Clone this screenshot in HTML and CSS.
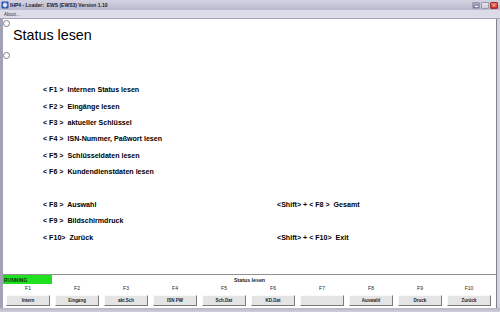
FILE: index.html
```html
<!DOCTYPE html>
<html lang="de">
<head>
    <meta charset="UTF-8">
    <title>IHP4 - Loader</title>
    <link rel="stylesheet" href="styles.css">
</head>
<body>
    <div class="window">
        <div class="titlebar">
            <svg class="app-icon" viewBox="0 0 8 8">
                <rect x="0.5" y="0.5" width="7" height="7" rx="1" fill="#3050b0"/>
                <circle cx="4" cy="4" r="2.4" fill="#a8c8f0"/>
                <path d="M2 4h4M4 2v4" stroke="#fff" stroke-width="0.8"/>
            </svg>
            <span class="title">IHP4 - Loader:  EWS (EWS3) Version 1.10</span>
            <div class="controls">
                <span class="ctl min"></span>
                <span class="ctl max"></span>
                <span class="ctl close">
                    <svg viewBox="0 0 8 8"><path d="M2 2l4 4M6 2l-4 4" stroke="#fff" stroke-width="1.1"/></svg>
                </span>
            </div>
        </div>
        <div class="menubar"><span>About...</span></div>

        <div class="client">
            <div class="screen">
                <span class="dot dot-top"></span>
                <span class="dot dot-low"></span>
                <h1>Status lesen</h1>
                <div class="keys">
                    <div>&lt; F1 &gt;  Internen Status lesen</div><div></div>
                    <div>&lt; F2 &gt;  Eingänge lesen</div><div></div>
                    <div>&lt; F3 &gt;  aktueller Schlüssel</div><div></div>
                    <div>&lt; F4 &gt;  ISN-Nummer, Paßwort lesen</div><div></div>
                    <div>&lt; F5 &gt;  Schlüsseldaten lesen</div><div></div>
                    <div>&lt; F6 &gt;  Kundendienstdaten lesen</div><div></div>
                    <div></div><div></div>
                    <div>&lt; F8 &gt;  Auswahl</div><div>&lt;Shift&gt; + &lt; F8 &gt;  Gesamt</div>
                    <div>&lt; F9 &gt;  Bildschirmdruck</div><div></div>
                    <div>&lt; F10&gt;  Zurück</div><div>&lt;Shift&gt; + &lt; F10&gt;  Exit</div>
                </div>
            </div>

            <div class="footer">
                <div class="statusline">
                    <span class="running">RUNNING</span>
                    <span class="status-text">Status lesen</span>
                </div>
                <div class="fkeys">
                    <div class="fk"><span class="fk-label">F1</span><span class="fk-btn">Intern</span></div>
                    <div class="fk"><span class="fk-label">F2</span><span class="fk-btn">Eingang</span></div>
                    <div class="fk"><span class="fk-label">F3</span><span class="fk-btn">akt.Sch</span></div>
                    <div class="fk"><span class="fk-label">F4</span><span class="fk-btn">ISN PW</span></div>
                    <div class="fk"><span class="fk-label">F5</span><span class="fk-btn">Sch.Dat</span></div>
                    <div class="fk"><span class="fk-label">F6</span><span class="fk-btn">KD.Dat</span></div>
                    <div class="fk"><span class="fk-label">F7</span><span class="fk-btn"></span></div>
                    <div class="fk"><span class="fk-label">F8</span><span class="fk-btn">Auswahl</span></div>
                    <div class="fk"><span class="fk-label">F9</span><span class="fk-btn">Druck</span></div>
                    <div class="fk"><span class="fk-label">F10</span><span class="fk-btn">Zurück</span></div>
                </div>
            </div>
        </div>
        <div class="bottom-frame"></div>
    </div>
</body>
</html>
```

FILE: styles.css
```css
body {
    margin: 0;
    font-family: "Liberation Sans", Arial, sans-serif;
    background: #fff;
}

.window {
    width: 500px;
    height: 312px;
    display: flex;
    flex-direction: column;
    background: #d4d4e0;
    overflow: hidden;
}

/* Titelleiste */
.titlebar {
    height: 10px;
    display: flex;
    align-items: center;
    background: linear-gradient(#d2d2e2, #babace);
    padding-left: 1px;
}

.app-icon {
    width: 8px;
    height: 8px;
    margin-right: 1px;
}

.title {
    font-size: 5px;
    font-weight: bold;
    color: #1c1c30;
    white-space: pre;
}

.controls {
    margin-left: auto;
    display: flex;
    gap: 1px;
    padding-right: 2px;
}

.ctl {
    width: 8px;
    height: 7px;
    border-radius: 1px;
    box-sizing: border-box;
    border: 1px solid #9a9ab0;
    display: flex;
}

.min {
    background: linear-gradient(#a8a8c0, #7c7c98);
    position: relative;
}

.min::after {
    content: "";
    position: absolute;
    left: 2px;
    bottom: 1px;
    width: 3px;
    height: 1px;
    background: #fff;
}

.max {
    background: linear-gradient(#e6e6ee, #cacad6);
}

.close {
    background: linear-gradient(#f07060, #c82c20);
    border-color: #a03030;
}

.close svg {
    width: 100%;
    height: 100%;
}

.menubar {
    height: 8px;
    background: #dcdce8;
    border-bottom: 1px solid #a4a4b4;
    display: flex;
    align-items: center;
    padding-left: 4px;
    font-size: 4.5px;
    color: #303040;
}

/* Arbeitsbereich */
.client {
    flex: 1;
    display: flex;
    flex-direction: column;
    background: #fff;
    border-left: 3px solid #a2a2b4;
    border-right: 1px solid #808090;
    margin-right: 3px;
}

.screen {
    height: 255px;
    position: relative;
    box-sizing: border-box;
    padding: 7px 0 0 10px;
}

.dot {
    position: absolute;
    left: 0;
    width: 5px;
    height: 5px;
    border: 1px solid #808080;
    border-radius: 50%;
    background: #fff;
}

.dot-top { top: 1px; }
.dot-low { top: 33px; }

h1 {
    margin: 0;
    font-size: 14.3px;
    font-weight: normal;
    line-height: 18px;
    color: #000;
}

.keys {
    margin: 38px 0 0 30px;
    display: grid;
    grid-template-columns: 234px auto;
    grid-auto-rows: 16.4px;
    align-items: center;
    font-size: 7.1px;
    font-weight: bold;
    white-space: pre;
    color: #000;
}

/* Fusszeile mit Funktionstasten */
.footer {
    border-top: 1px solid #909090;
    padding-bottom: 2px;
}

.statusline {
    height: 9px;
    display: grid;
    grid-template-columns: 49px 1fr 49px;
    align-items: center;
}

.running {
    height: 100%;
    background: #20e020;
    font-size: 5px;
    font-weight: bold;
    color: #113311;
    display: flex;
    align-items: center;
    padding-left: 1px;
}

.status-text {
    text-align: center;
    font-size: 5.3px;
    font-weight: bold;
    color: #222;
}

.fkeys {
    display: flex;
    gap: 5px;
    padding-left: 3px;
}

.fk {
    width: 44px;
    display: flex;
    flex-direction: column;
    align-items: center;
}

.fk-label {
    height: 9px;
    line-height: 9px;
    font-size: 5px;
    color: #222;
}

.fk-btn {
    margin-top: 2px;
    width: 44px;
    height: 11px;
    box-sizing: border-box;
    background: #e4e4e4;
    border: 1px solid;
    border-color: #fafafa #7a7a7a #7a7a7a #fafafa;
    display: flex;
    align-items: center;
    justify-content: center;
    font-size: 4.5px;
    font-weight: bold;
    color: #222;
}

.bottom-frame {
    height: 4px;
    background: linear-gradient(#b4b4c6, #d0d0dc);
}
```
